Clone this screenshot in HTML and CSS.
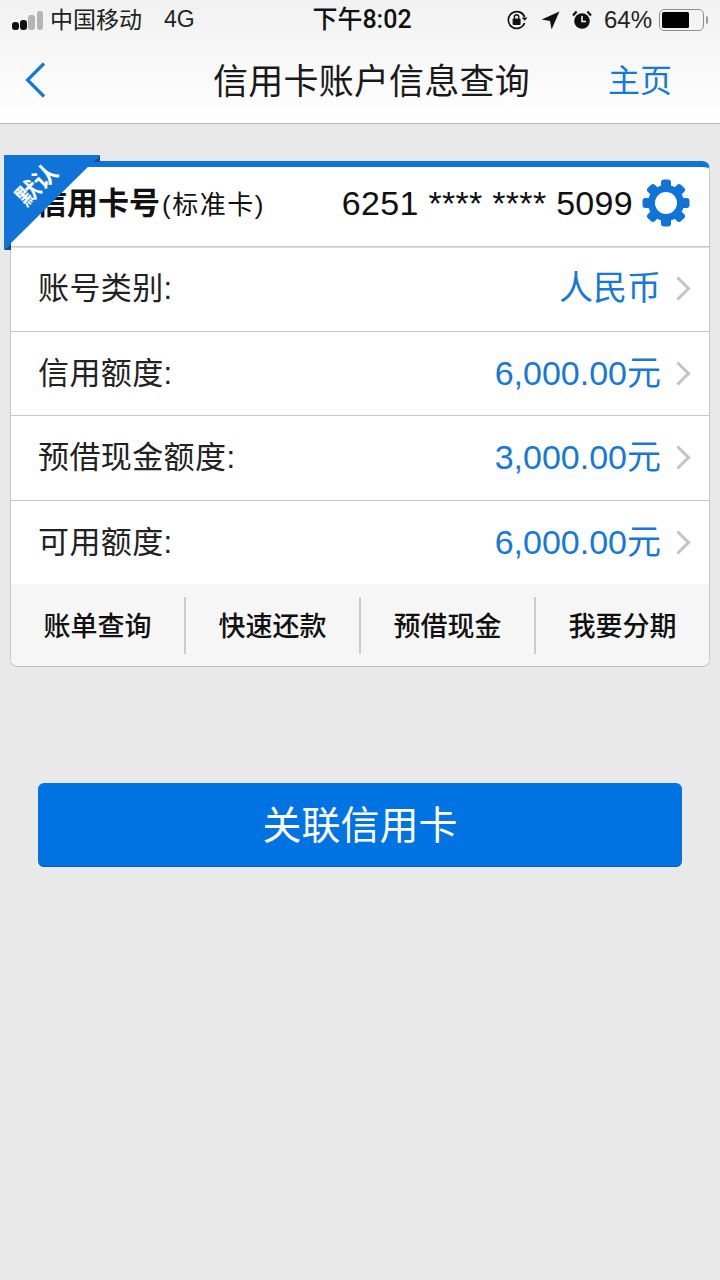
FILE: index.html
```html
<!DOCTYPE html>
<html lang="zh-CN">
<head>
  <meta charset="UTF-8">
  <meta name="viewport" content="width=device-width, initial-scale=1.0">
  <title>信用卡账户信息查询</title>
  <link rel="stylesheet" href="styles.css">
</head>
<body>
  <div class="header">
    <div class="status-bar">
      <div class="status-left">
        <div class="signal">
          <span class="dot on"></span>
          <span class="dot on"></span>
          <span class="dot"></span>
          <span class="dot"></span>
        </div>
        <span class="carrier">中国移动</span>
        <span class="network">4G</span>
      </div>
      <div class="status-time">下午8:02</div>
      <div class="status-right">
        <svg class="icon-lock" width="22" height="22" viewBox="0 0 22 22">
          <path d="M18.6 8A8.4 8.4 0 1 0 18.6 14" fill="none" stroke="#111" stroke-width="1.7"/>
          <path d="M15.6 8.4h6l-3 3.4z" fill="#111"/>
          <rect x="6.6" y="9.6" width="8" height="6.4" rx="1" fill="#111"/>
          <path d="M8.4 9.800V8a2.2 2.2 0 0 1 4.4 0v1.800" fill="none" stroke="#111" stroke-width="1.4"/>
        </svg>
        <svg class="icon-arrow" width="19" height="19" viewBox="0 0 19 19">
          <path d="M18.4 0.6 0.6 8.4 9 10 10.6 18.4z" fill="#111"/>
        </svg>
        <svg class="icon-alarm" width="20" height="20" viewBox="0 0 20 20">
          <circle cx="10" cy="11" r="7.8" fill="#111"/>
          <path d="M10 6v5.4h4" fill="none" stroke="#fff" stroke-width="1.5"/>
          <path d="M1 5.4 4.6 1.6M19 5.4 15.4 1.6" stroke="#111" stroke-width="2.2"/>
        </svg>
        <span class="battery-text">64%</span>
        <div class="battery"><div class="battery-level"></div></div>
        <div class="battery-cap"></div>
      </div>
    </div>
    <div class="nav-bar">
      <svg class="back" width="24" height="38" viewBox="0 0 24 38">
        <path d="M20 2.500 3.500 19 20 35.500" fill="none" stroke="#1878d8" stroke-width="3.200"/>
      </svg>
      <div class="nav-title">信用卡账户信息查询</div>
      <div class="nav-home">主页</div>
    </div>
  </div>

  <div class="card-wrap">
    <div class="ribbon">
      <div class="ribbon-shape"></div>
      <div class="ribbon-fold top"></div>
      <div class="ribbon-fold bottom"></div>
      <div class="ribbon-text">默认</div>
    </div>
    <div class="card">
      <div class="card-head">
        <div class="card-name">信用卡号<span class="card-type">(标准卡)</span></div>
        <div class="card-number">6251 **** **** 5099</div>
        <svg class="gear" width="48" height="48" viewBox="0 0 48 48">
          <g fill="#0f73d8">
            <rect x="19" y="0.500" width="10" height="47" rx="3"/>
            <rect x="19" y="0.500" width="10" height="47" rx="3" transform="rotate(45 24 24)"/>
            <rect x="19" y="0.500" width="10" height="47" rx="3" transform="rotate(90 24 24)"/>
            <rect x="19" y="0.500" width="10" height="47" rx="3" transform="rotate(135 24 24)"/>
          </g>
          <circle cx="24" cy="24" r="18" fill="#0f73d8"/>
          <circle cx="24" cy="24" r="11" fill="#fff"/>
        </svg>
      </div>
      <div class="row">
        <div class="row-label">账号类别:</div>
        <div class="row-value">人民币</div>
        <div class="chevron"></div>
      </div>
      <div class="row">
        <div class="row-label">信用额度:</div>
        <div class="row-value">6,000.00元</div>
        <div class="chevron"></div>
      </div>
      <div class="row">
        <div class="row-label">预借现金额度:</div>
        <div class="row-value">3,000.00元</div>
        <div class="chevron"></div>
      </div>
      <div class="row last">
        <div class="row-label">可用额度:</div>
        <div class="row-value">6,000.00元</div>
        <div class="chevron"></div>
      </div>
      <div class="actions">
        <div class="action">账单查询</div>
        <div class="action">快速还款</div>
        <div class="action">预借现金</div>
        <div class="action">我要分期</div>
      </div>
    </div>
  </div>

  <button class="link-button">关联信用卡</button>
</body>
</html>
```

FILE: styles.css
```css
* {
  margin: 0;
  padding: 0;
  box-sizing: border-box;
}

body {
  width: 720px;
  min-height: 1280px;
  background: #e9e9e9;
  font-family: "Liberation Sans", "Noto Sans CJK SC", sans-serif;
  color: #111;
}

.header {
  height: 124px;
  background: linear-gradient(180deg, #f1f1f1 0%, #ffffff 100%);
  border-bottom: 1px solid #b9b9b9;
}

.status-bar {
  height: 40px;
  display: flex;
  align-items: center;
  justify-content: space-between;
  position: relative;
  padding: 0 12px 0 12px;
  font-size: 23px;
  color: #222;
}

.status-left,
.status-right {
  display: flex;
  align-items: center;
}

.signal {
  display: flex;
  align-items: flex-end;
  gap: 1.700px;
  margin-right: 7px;
}

.dot {
  width: 6.500px;
  border-radius: 3px;
  background: #b4b4b4;
}

.dot:nth-child(1) { height: 8px; }
.dot:nth-child(2) { height: 10px; }
.dot:nth-child(3) { height: 15px; }
.dot:nth-child(4) { height: 19px; }
.dot.on { background: #111; }

.carrier {
  margin-bottom: 4px;
}

.network {
  margin-left: 22px;
  margin-bottom: 1px;
}

.status-time {
  position: absolute;
  left: 0;
  right: 0;
  top: 4px;
  text-align: center;
  font-family: Roboto, "Noto Sans CJK SC", sans-serif;
  font-size: 25px;
  font-weight: 500;
  line-height: 32px;
  padding-left: 4px;
  color: #111;
}

.status-right svg {
  margin-right: 11px;
}

.status-right .icon-arrow {
  margin-left: 2px;
  margin-right: 12px;
}

.battery-text {
  font-size: 24px;
  margin-left: 1px;
  margin-right: 7px;
}

.battery {
  width: 45px;
  height: 22px;
  border: 1.500px solid #8e8e8e;
  border-radius: 5px;
  padding: 2px;
}

.battery-level {
  width: 27px;
  height: 100%;
  background: #000;
  border-radius: 1.500px;
}

.battery-cap {
  width: 2px;
  height: 8px;
  margin-left: 2px;
  background: #9a9a9a;
  border-radius: 0 2px 2px 0;
}

.nav-bar {
  height: 83px;
  position: relative;
  display: flex;
  align-items: center;
  justify-content: center;
}

.back {
  position: absolute;
  left: 24px;
  top: 21px;
}

.nav-title {
  font-size: 35px;
  color: #1a1a1a;
  margin-left: 23px;
  margin-bottom: 6px;
  letter-spacing: 0.200px;
}

.nav-home {
  position: absolute;
  right: 48px;
  top: 15px;
  font-size: 32px;
  color: #1878d8;
}

.card-wrap {
  position: relative;
  padding: 37px 10px 0 10px;
}

.ribbon {
  position: absolute;
  left: 4px;
  top: 31px;
  width: 96px;
  height: 95px;
}

.ribbon-shape {
  width: 100%;
  height: 100%;
  background: #0f73d8;
  clip-path: polygon(0 0, 100% 0, 0 100%);
}

.ribbon-fold {
  position: absolute;
  width: 7px;
  height: 7px;
  background: #0a4f9c;
  clip-path: polygon(100% 0, 100% 100%, 0 100%);
}

.ribbon-fold.top {
  right: 0;
  top: 0;
}

.ribbon-fold.bottom {
  left: 0;
  bottom: 0;
}

.ribbon-text {
  position: absolute;
  left: 1px;
  top: 11px;
  width: 60px;
  text-align: center;
  font-size: 24px;
  font-weight: 700;
  color: #fff;
  letter-spacing: -0.500px;
  transform: rotate(-45deg);
}

.card {
  background: #fff;
  border: 1px solid #c8c8c8;
  border-top: 6px solid #0f73d8;
  border-bottom-color: #bdbdbd;
  border-radius: 8px;
  height: 506px;
  overflow: hidden;
}

.card-head {
  height: 80px;
  display: flex;
  align-items: center;
  padding: 0 19px 0 25px;
  border-bottom: 1px solid #cacaca;
  box-shadow: 0 1px 0 #dedede;
}

.card-name {
  font-size: 31px;
  font-weight: 700;
  white-space: nowrap;
  margin-bottom: 12px;
}

.card-type {
  font-size: 26px;
  font-weight: 400;
  margin-left: 2px;
  letter-spacing: 1.500px;
}

.card-number {
  margin-left: auto;
  font-size: 34px;
  letter-spacing: 0.300px;
  white-space: nowrap;
  margin-bottom: 6px;
}

.gear {
  margin-left: 9px;
  margin-bottom: 7px;
  flex: none;
}

.row {
  height: 84.600px;
  display: flex;
  align-items: center;
  padding: 0 17px 0 27px;
  border-bottom: 1px solid #c8c8c8;
}

.row.last {
  height: 83px;
  border-bottom: none;
}

.row-label {
  font-size: 31px;
  letter-spacing: 0.400px;
  color: #222;
  margin-bottom: 6px;
}

.row-value {
  margin-left: auto;
  font-size: 34px;
  color: #1878d8;
  margin-bottom: 6px;
}

.chevron {
  width: 17px;
  height: 17px;
  margin: 0 5px 0 9px;
  border-top: 3px solid #c4c4c4;
  border-right: 3px solid #c4c4c4;
  transform: rotate(45deg);
}

.actions {
  height: 83px;
  display: flex;
  align-items: center;
  background: #f6f6f6;
}

.action {
  flex: 1;
  height: 57px;
  padding-bottom: 1px;
  display: flex;
  align-items: center;
  justify-content: center;
  font-size: 27px;
  font-weight: 500;
  color: #111;
  border-right: 2px solid #cccccc;
}

.action:last-child {
  border-right: none;
}

.link-button {
  display: block;
  width: 644px;
  height: 84px;
  margin: 116px 0 0 38px;
  padding-bottom: 6px;
  background: #0073e3;
  border: none;
  border-bottom: 1px solid #0a5fb4;
  border-radius: 6px;
  color: #fff;
  font-family: inherit;
  font-size: 39px;
}
```
